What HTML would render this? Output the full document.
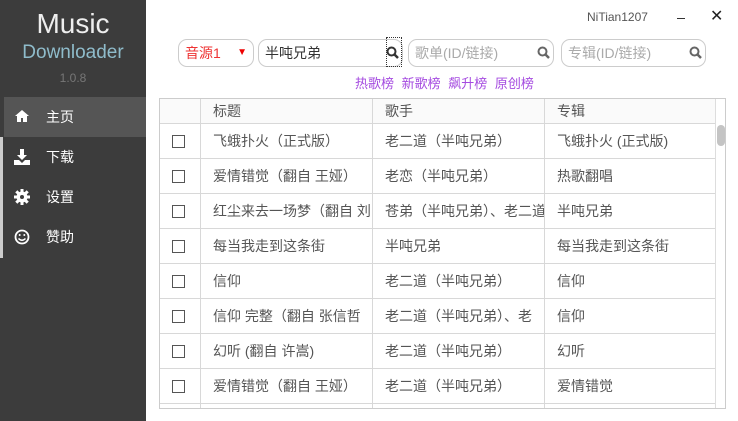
<!DOCTYPE html>
<html><head><meta charset="utf-8"><style>
*{margin:0;padding:0;box-sizing:border-box}
body{width:738px;height:421px;overflow:hidden;background:#fff;font-family:"Liberation Sans","Noto Sans CJK SC",sans-serif;position:relative}
.side{position:absolute;left:0;top:0;width:146px;height:421px;background:#3c3c3c}
.t1{position:absolute;top:8px;width:146px;text-align:center;color:#eee;font-size:28px}
.t2{position:absolute;top:42px;width:146px;text-align:center;color:#8fbccb;font-size:19px}
.t3{position:absolute;top:71px;width:146px;text-align:center;color:#777;font-size:12px}
.nav{position:absolute;left:4px;width:142px;height:40px;color:#fff;font-size:14px;line-height:40px;padding-left:42px}
.nav.on{background:#555}
.ico{position:absolute;left:10px;top:12px}
.strip{position:absolute;left:0;top:137px;width:3px;height:121px;background:#ccc}
.abs{position:absolute}
.box{position:absolute;top:39px;height:28px;border:1px solid #ccc;border-radius:9px;font-size:14px;line-height:26px;padding-left:6px;color:#aaa}
.tbl{position:absolute;left:159px;top:98px;width:567px;height:311px;border:1px solid #ccc;overflow:hidden}
.row{position:absolute;left:0;width:555px;height:35px;border-bottom:1px solid #d8d8d8;font-size:14px;color:#555;line-height:34px}
.c{position:absolute;top:0;height:100%;border-left:1px solid #d8d8d8;padding-left:12px;white-space:nowrap;overflow:hidden}
.cb{position:absolute;left:12px;top:11px;width:13px;height:13px;border:1px solid #555}
</style></head><body>
<div class="side">
<div class="t1">Music</div><div class="t2">Downloader</div><div class="t3">1.0.8</div>
<div class="nav on" style="top:97px"><svg class="ico" width="16" height="14" viewBox="0 0 16 14"><path d="M8 1L1 7h2v6h4V9h2v4h4V7h2z" fill="#fff"/></svg>主页</div>
<div class="nav" style="top:137px"><svg class="ico" width="16" height="16" viewBox="0 0 16 16"><path d="M6 0h4v6h3l-5 5-5-5h3z M0 11h5l3 3 3-3h5v5H0z" fill="#fff"/></svg>下载</div>
<div class="nav" style="top:177px"><svg class="ico" width="16" height="16" viewBox="0 0 16 16"><circle cx="8" cy="8" r="5.5" fill="#fff"/><g stroke="#fff" stroke-width="3"><path d="M8 0v16M0 8h16M2.3 2.3l11.4 11.4M13.7 2.3L2.3 13.7"/></g><circle cx="8" cy="8" r="2" fill="#3c3c3c"/></svg>设置</div>
<div class="nav" style="top:217px"><svg class="ico" width="16" height="16" viewBox="0 0 16 16"><circle cx="8" cy="8" r="6.5" fill="none" stroke="#fff" stroke-width="1.8"/><circle cx="5.7" cy="6" r="1" fill="#fff"/><circle cx="10.3" cy="6" r="1" fill="#fff"/><path d="M4.5 9.5q3.5 3.5 7 0" fill="none" stroke="#fff" stroke-width="1.5"/></svg>赞助</div>
<div class="strip"></div>
</div>
<div class="abs" style="left:587px;top:10px;font-size:12px;color:#555">NiTian1207</div>
<div class="abs" style="left:677px;top:18px;width:8px;height:1px;background:#333"></div>
<div class="abs" style="left:710px;top:6px;font-size:16px;color:#222">✕</div>
<div class="box" style="left:178px;width:76px;color:#e33">音源1<span style="position:absolute;right:6px;top:0;font-size:10px;color:#e00">▼</span></div>
<div class="box" style="left:258px;width:145px;color:#333">半吨兄弟<div style="position:absolute;right:0;top:-3px;width:16px;height:30px;border:1px dotted #333"></div></div>
<div class="box" style="left:408px;width:146px">歌单(ID/链接)</div>
<div class="box" style="left:561px;width:145px">专辑(ID/链接)</div>
<svg class="abs" style="left:386px;top:46px" width="13" height="13" viewBox="0 0 13 13"><circle cx="5.5" cy="5.5" r="4" fill="none" stroke="#333" stroke-width="2"/><path d="M8.5 8.5l3.5 3.5" stroke="#333" stroke-width="2.5"/></svg>
<svg class="abs" style="left:537px;top:46px" width="13" height="13" viewBox="0 0 13 13"><circle cx="5.5" cy="5.5" r="4" fill="none" stroke="#666" stroke-width="2"/><path d="M8.5 8.5l3.5 3.5" stroke="#666" stroke-width="2.5"/></svg>
<svg class="abs" style="left:689px;top:46px" width="13" height="13" viewBox="0 0 13 13"><circle cx="5.5" cy="5.5" r="4" fill="none" stroke="#666" stroke-width="2"/><path d="M8.5 8.5l3.5 3.5" stroke="#666" stroke-width="2.5"/></svg>
<div class="abs" style="left:355px;top:73px;font-size:13px;color:#a54be0;word-spacing:4px">热歌榜 新歌榜 飙升榜 原创榜</div>
<div class="tbl">
<div class="row" style="top:0;height:25px;line-height:24px;background:#fafafa"><div class="c" style="left:0;border:0"></div><div class="c" style="left:40px;width:173px">标题</div><div class="c" style="left:212px;width:173px">歌手</div><div class="c" style="left:384px;width:171px">专辑</div></div>
<div class="row" style="top:25px"><div class="cb"></div><div class="c" style="left:40px;width:173px">飞蛾扑火（正式版）</div><div class="c" style="left:212px;width:173px">老二道（半吨兄弟）</div><div class="c" style="left:384px;width:171px">飞蛾扑火 (正式版)</div></div>
<div class="row" style="top:60px"><div class="cb"></div><div class="c" style="left:40px;width:173px">爱情错觉（翻自 王娅）</div><div class="c" style="left:212px;width:173px">老恋（半吨兄弟）</div><div class="c" style="left:384px;width:171px">热歌翻唱</div></div>
<div class="row" style="top:95px"><div class="cb"></div><div class="c" style="left:40px;width:173px">红尘来去一场梦（翻自 刘</div><div class="c" style="left:212px;width:173px">苍弟（半吨兄弟）、老二道</div><div class="c" style="left:384px;width:171px">半吨兄弟</div></div>
<div class="row" style="top:130px"><div class="cb"></div><div class="c" style="left:40px;width:173px">每当我走到这条街</div><div class="c" style="left:212px;width:173px">半吨兄弟</div><div class="c" style="left:384px;width:171px">每当我走到这条街</div></div>
<div class="row" style="top:165px"><div class="cb"></div><div class="c" style="left:40px;width:173px">信仰</div><div class="c" style="left:212px;width:173px">老二道（半吨兄弟）</div><div class="c" style="left:384px;width:171px">信仰</div></div>
<div class="row" style="top:200px"><div class="cb"></div><div class="c" style="left:40px;width:173px">信仰 完整（翻自 张信哲</div><div class="c" style="left:212px;width:173px">老二道（半吨兄弟）、老</div><div class="c" style="left:384px;width:171px">信仰</div></div>
<div class="row" style="top:235px"><div class="cb"></div><div class="c" style="left:40px;width:173px">幻听 (翻自 许嵩)</div><div class="c" style="left:212px;width:173px">老二道（半吨兄弟）</div><div class="c" style="left:384px;width:171px">幻听</div></div>
<div class="row" style="top:270px"><div class="cb"></div><div class="c" style="left:40px;width:173px">爱情错觉（翻自 王娅）</div><div class="c" style="left:212px;width:173px">老二道（半吨兄弟）</div><div class="c" style="left:384px;width:171px">爱情错觉</div></div>
<div class="row" style="top:305px"><div class="c" style="left:40px;width:173px"></div><div class="c" style="left:212px;width:173px"></div><div class="c" style="left:384px;width:171px"></div></div>
<div class="abs" style="left:555px;top:0;width:1px;height:311px;background:#ddd"></div>
<div class="abs" style="left:557px;top:26px;width:8px;height:21px;border-radius:4px;background:#c4c4c4"></div>
</div>
</body></html>
